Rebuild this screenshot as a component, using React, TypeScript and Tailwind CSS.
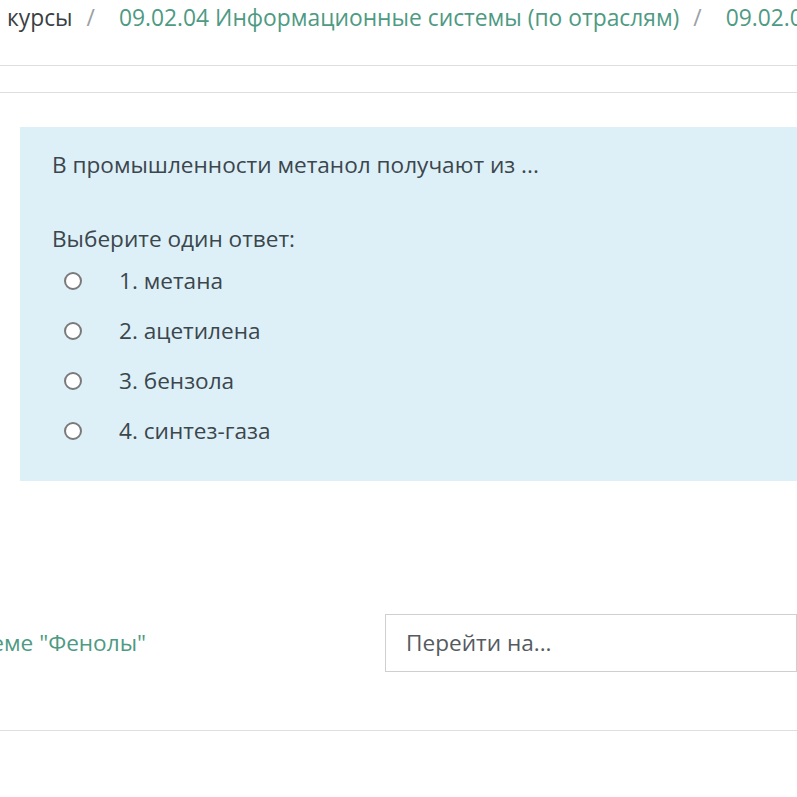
const options = ['1. метана', '2. ацетилена', '3. бензола', '4. синтез-газа'];

function Radio() {
  return (
    <span className="inline-block w-[18px] h-[18px] rounded-full border-2 border-[#7a7a7a] bg-white shrink-0" />
  );
}

export default function App() {
  return (
    <div
      className="w-[797px] h-[797px] overflow-hidden bg-white text-[22.6px] text-[#3b464d]"
      style={{ fontFamily: '"Open Sans", "Noto Sans", sans-serif' }}
    >
      <nav className="h-[65px] flex items-start pl-[7px] whitespace-nowrap text-[22.8px] leading-[36px]">
        <span className="text-[#3a3f44]">курсы</span>
        <span className="ml-[14px] mr-[24px] text-[#9aa0a4]">/</span>
        <span className="text-[#4e9a83]">09.02.04 Информационные системы (по отраслям)</span>
        <span className="ml-[14px] mr-[24px] text-[#9aa0a4]">/</span>
        <span className="text-[#4e9a83]">09.02.04</span>
      </nav>
      <div className="border-t border-[#dedede] h-[27px]" />
      <div className="border-t border-[#dedede] pt-[34px] pl-[20px]">
        <div className="bg-[#def0f7] h-[354px] pl-[32px] pt-[22px]">
          <p className="leading-[32px]">В промышленности метанол получают из ...</p>
          <p className="mt-[42px] leading-[32px]">Выберите один ответ:</p>
          <ul className="mt-[1px]">
            {options.map((o) => (
              <li key={o} className="flex items-center h-[50px] pl-[12px]">
                <Radio />
                <span className="ml-[37px]">{o}</span>
              </li>
            ))}
          </ul>
        </div>
      </div>
      <div className="mt-[133px] flex items-center h-[58px]">
        <span className="w-[385px] text-[#4e9a83] whitespace-nowrap overflow-hidden flex justify-end">
          <span className="mr-[239px]">еме "Фенолы"</span>
        </span>
        <div className="flex-1 h-[58px] border border-[#cfcfcf] flex items-center pl-[20px] text-[#555b60]">
          Перейти на...
        </div>
      </div>
      <div className="mt-[58px] border-t border-[#dedede]" />
    </div>
  );
}
